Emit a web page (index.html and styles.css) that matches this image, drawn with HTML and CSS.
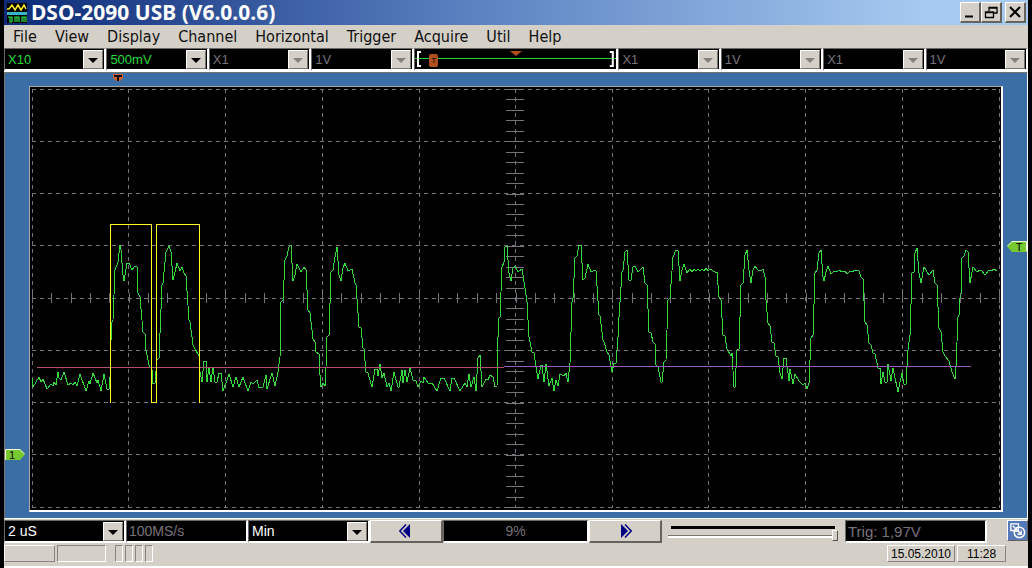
FILE: index.html
```
<!DOCTYPE html>
<html lang="en">
<head>
    <meta charset="UTF-8">
    <meta name="viewport" content="width=device-width, initial-scale=1.0">
    <title>DSO-2090 USB (V6.0.0.6)</title>
    <link rel="stylesheet" href="styles.css">
</head>
<body>

    <div class="window">
        <!-- Title bar -->
        <header class="titlebar">
            <svg class="app-icon" viewBox="0 0 20 20">
                <rect width="20" height="20" fill="#000"/>
                <rect y="9" width="20" height="3" fill="#35b6c8"/>
                <path d="M0 6H2L5 2L8 7L11 2L14 7L17 2L19 6" fill="none" stroke="#ffee22" stroke-width="1.5"/>
                <path d="M1 14H5V19M3 14V19H5M8 19V14H12V19M10 19V14M15 19V14H19V19M17 14V19" fill="none" stroke="#2fe04a" stroke-width="1.2"/>
            </svg>
            <h1>DSO-2090 USB (V6.0.0.6)</h1>
            <div class="window-buttons">
                <button type="button" aria-label="Minimize"><svg viewBox="0 0 14 14"><path d="M2 11.5H10" stroke="#000" stroke-width="2"/></svg></button>
                <button type="button" aria-label="Restore"><svg viewBox="0 0 14 14"><path d="M5 6V2.5H13V8H10M5 2.5H13M1.5 7H9.5V12.5H1.5ZM1.5 7.5H9.5M5 3H13" fill="none" stroke="#000" stroke-width="1.3"/></svg></button>
                <button type="button" class="close" aria-label="Close"><svg viewBox="0 0 14 14"><path d="M2 2L12 12M12 2L2 12" stroke="#000" stroke-width="2"/></svg></button>
            </div>
        </header>

        <!-- Menu -->
        <nav class="menu">
            <a href="#">File</a>
            <a href="#">View</a>
            <a href="#">Display</a>
            <a href="#">Channel</a>
            <a href="#">Horizontal</a>
            <a href="#">Trigger</a>
            <a href="#">Acquire</a>
            <a href="#">Util</a>
            <a href="#">Help</a>
        </nav>

        <!-- Channel settings -->
        <div class="channels">
            <div class="combo green"><select aria-label="CH1 probe"><option>X10</option></select><span class="arrow"></span></div>
            <div class="combo green"><select aria-label="CH1 voltage"><option>500mV</option></select><span class="arrow"></span></div>
            <div class="combo"><select aria-label="CH2 probe" disabled><option>X1</option></select><span class="arrow"></span></div>
            <div class="combo"><select aria-label="CH2 voltage" disabled><option>1V</option></select><span class="arrow"></span></div>
            <div class="position">
                <svg viewBox="0 0 202 20" preserveAspectRatio="none">
                    <path d="M0 9.5H202" stroke="#22d83a"/>
                    <path d="M6 3H3V17H6M195 3H198V17H195" fill="none" stroke="#fff" stroke-width="2"/>
                    <path d="M95 2H107L101 7Z" fill="#b0501e"/>
                    <rect x="14" y="5" width="9" height="13" rx="2" fill="#b0501e"/>
                    <path d="M17 9.5H21M19 9V14" stroke="#3c1a08"/>
                </svg>
            </div>
            <div class="combo"><select aria-label="CH3 probe" disabled><option>X1</option></select><span class="arrow"></span></div>
            <div class="combo"><select aria-label="CH3 voltage" disabled><option>1V</option></select><span class="arrow"></span></div>
            <div class="combo"><select aria-label="CH4 probe" disabled><option>X1</option></select><span class="arrow"></span></div>
            <div class="combo"><select aria-label="CH4 voltage" disabled><option>1V</option></select><span class="arrow"></span></div>
        </div>

        <!-- Scope screen -->
        <main class="scope">
            <svg class="screen" viewBox="30 87 971 423" preserveAspectRatio="none">
                <!-- grid -->
                <g class="grid">
                    <path d="M32 89.5H999M32 141.5H999M32 193.5H999M32 245.5H999M32 298.5H999M32 350.5H999M32 402.5H999M32 454.5H999M32 507.5H999"/>
                    <path d="M32.5 89V508M128.5 89V508M225.5 89V508M322.5 89V508M419.5 89V508M515.5 89V508M612.5 89V508M708.5 89V508M805.5 89V508M902.5 89V508M999.5 89V508"/>
                </g>
                <path class="ticks-x" d="M32 298H1000"/>
                <path class="ticks-y" d="M515 89V508"/>
                <!-- signal -->
                <polyline class="signal" points="32,378 33,387 39,377 41,382 43,379 47,389 51,384 53,386 54,382 56,385 58,372 59,378 61,380 64,372 68,385 71,383 73,385 75,382 77,386 80,374 86,391 89,381 90,384 93,373 97,383 98,380 101,391 104,374 107,389 109,389 110,377
                    111,340 112,322 113,320 115,270 118,262 120,245 121,250 123,275 124,281 127,263 129,263 132,270 135,266 137,267 138,293 140,297 143,332 145,334 146,350 149,365 152,370 153,384 155,383 157,360 159,358
                    162,285 163,283 166,252 169,246 171,252 173,280 175,272 177,263 180,271 182,267 184,273 186,276 189,320 190,322 193,345 199,356 200,372 202,382 204,361 206,361 207,382 209,367 211,382 213,367 215,382 217,382 219,373 221,373 223,391 227,380 229,374 233,387 236,377 239,387 243,377 248,391 251,382 253,384 257,380
                    259,388 263,387 266,375 267,389 272,373 275,386 278,372 280,357 281,302 283,300 285,260 287,256 289,247 291,245 293,281 295,275 297,264 301,272 304,267 306,270 308,310 310,313 313,339 315,342 316,352 319,354 320,375 321,387 323,383 325,386 326,367
                    327,337 329,335 331,272 333,270 335,257 337,247 339,275 341,281 343,268 345,263 348,271 352,269 355,283 356,285 359,327 361,328 363,348 364,349 366,372 368,373 372,387 375,369 377,369 378,376 380,364 382,378 384,373 387,387 389,383 391,391 394,372 398,387 399,387 402,370 403,383 405,370 407,382 410,368 413,380 416,381 418,387 421,381 423,383 424,377 428,383 432,383 437,391 441,378 444,378 450,391 452,378 454,378 460,391 465,383 467,387 469,374 471,387 474,377 476,391 478,358 480,355 482,387 486,379 488,380 490,375 493,377 495,387 497,386
                    498,337 499,318 500,317 502,267 504,262 505,247 507,246 509,273 511,281 513,268 515,266 518,272 522,269 525,288 527,302 529,337 532,352 534,353 536,367 538,379 541,365 542,365 544,382 546,364 549,386 552,378 554,391 556,380 558,386 560,374 564,376 566,373 568,382 570,363
                    572,302 573,298 575,258 577,256 579,245 581,245 583,280 585,278 588,264 591,272 595,270 596,271 599,315 600,316 603,340 604,342 607,352 609,355 612,372 614,363 616,363 618,337 619,317 622,272 623,270 625,252 627,250 629,280 631,280 633,267 635,266 638,272 643,267 645,283 647,285 649,332 651,333 653,342 655,344 656,365 658,367 661,382 662,382 664,362 666,360
                    668,300 670,298 673,257 676,250 678,251 680,281 682,270 684,264 687,273 690,269 692,272 694,269 696,271 698,269 700,271 702,269 704,271 706,268 708,271 710,269 715,272 717,272 719,297 721,300 723,335 725,336 727,349 731,356 732,353 734,387 735,387 737,350 739,349 741,285 743,283 745,255 747,250 749,270 751,283 753,270 755,266 758,270 762,270 763,269 765,277 766,300
                    768,323 770,326 772,342 774,343 776,356 778,357 780,373 782,379 784,358 786,358 789,381 790,369 793,384 795,374 799,381 803,385 805,383 807,389 809,383 811,338 813,335 815,273 817,270 819,253 821,250 823,277 824,281 826,272 828,266 831,274 834,271 837,272 839,270 842,272 845,271 847,274 850,271 852,272 855,270 859,271 861,277 863,279 865,322 867,325 869,343 871,345 873,353 875,354 878,368 880,368 881,384 883,372 885,382 887,382 888,364 891,381 893,368 898,392 902,373 904,384 906,384
                    908,350 910,335 912,273 914,272 915,253 917,248 919,273 921,283 924,267 929,275 933,270 935,283 937,285 939,328 941,332 943,352 945,356 949,361 952,372 955,379 956,367 958,317 959,315 960,298 961,295 962,258 964,256 966,250 968,252 970,283 973,267 977,272 980,270 982,271 985,275 989,270 991,271 994,269 997,271"/>
                <path class="level-left" d="M37 367.5H504"/>
                <path class="level-right" d="M504 366.5H971"/>
                <!-- measured bits -->
                <path class="bits" d="M110.5 403V224.5H151.5V402.5H156.5V224.5H199.5V403"/>
            </svg>

            <svg class="marker marker-time" viewBox="0 0 12 9">
                <path d="M1 1H11V5L8 8H4L1 5Z" fill="#d0662c"/>
                <path d="M2 3H10M6 3V8" stroke="#120804" stroke-width="2"/>
            </svg>
            <div class="marker marker-ch1">
                <svg viewBox="0 0 20 11"><path d="M0 0H15L20 5.5L15 11H0Z" fill="#78c832"/><path d="M0.5 11V0.5H15L19.5 5" fill="none" stroke="#f4f8d8"/></svg>
                <span>1</span>
            </div>
            <div class="marker marker-trigger">
                <svg viewBox="0 0 20 11"><path d="M20 0H5L0 5.5L5 11H20Z" fill="#78c832"/><path d="M0.5 5L5 0.5H19.5V10" fill="none" stroke="#f4f8d8"/></svg>
                <span>T</span>
            </div>
        </main>

        <!-- Time base controls -->
        <div class="controls">
            <div class="combo white"><select aria-label="Time base"><option>2 uS</option></select><span class="arrow"></span></div>
            <output class="field">100MS/s</output>
            <div class="combo white"><select aria-label="Measurement"><option>Min</option></select><span class="arrow"></span></div>
            <button type="button" class="step" aria-label="Back"><svg viewBox="0 0 14 14"><path d="M7 0.5L0.8 7L7 13.5" fill="none" stroke="#000080" stroke-width="1.5"/><path d="M11 0V14L4 7Z" fill="#000080"/></svg></button>
            <output class="field center">9%</output>
            <button type="button" class="step" aria-label="Forward"><svg viewBox="0 0 14 14"><path d="M7 0.5L13.2 7L7 13.5" fill="none" stroke="#000080" stroke-width="1.5"/><path d="M3 0V14L10 7Z" fill="#000080"/></svg></button>
            <input type="range" class="slider" aria-label="Position" min="0" max="100" value="100">
            <output class="field trig">Trig: 1,97V</output>
            <button type="button" class="link-button" aria-label="Connection">
                <svg viewBox="0 0 20 20"><path d="M8 10H3V3H11V6M5 5L11 11M11 7V11H7" fill="none" stroke="#fff" stroke-width="1.4"/><circle cx="12" cy="12" r="5.5" fill="none" stroke="#fff" stroke-width="1.6"/><path d="M10 10L14 14M14 10V14H10" fill="none" stroke="#fff" stroke-width="1.5"/></svg>
            </button>
        </div>

        <!-- Status bar -->
        <footer class="status">
            <div class="panel first"></div>
            <div class="panel second"></div>
            <div class="panel small"></div>
            <div class="panel small"></div>
            <div class="panel small"></div>
            <div class="panel small"></div>
            <div class="panel date">15.05.2010</div>
            <div class="panel time">11:28</div>
        </footer>
    </div>

</body>
</html>
```
FILE: styles.css
```
* {
    box-sizing: border-box;
}

/* Black edge around the window */
body {
    margin: 0;
    padding: 0 4px;
    min-height: 100vh;
    display: flex;
    background-color: #000;
    font-family: "Liberation Sans", Arial, sans-serif;
}

.window {
    flex: 1;
    min-width: 0;
    display: flex;
    flex-direction: column;
    background-color: #d4d0c8;
}

svg {
    display: block;
}

button {
    display: flex;
    align-items: center;
    justify-content: center;
    margin: 0;
    padding: 0;
    background-color: #d4d0c8;
    border: 1px solid;
    border-width: 1px 2px 2px 1px;
    border-color: #fff #66635e #66635e #fff;
}

/* Title bar */
.titlebar {
    display: flex;
    align-items: center;
    height: 25px;
    padding: 0 2px 0 3px;
    background: linear-gradient(to right, #0c2a76, #5a80c0 45%, #a6caf0 90%);
}

.app-icon {
    width: 20px;
    height: 20px;
}

.titlebar h1 {
    flex: 1;
    margin: 0 0 0 4px;
    font: bold 21px/25px "Noto Sans", sans-serif;
    color: #fff;
}

.window-buttons {
    display: flex;
}

.window-buttons button {
    width: 21px;
    height: 21px;
}

.window-buttons .close {
    margin-left: 3px;
}

.window-buttons svg {
    width: 14px;
    height: 14px;
}

/* Menu */
.menu {
    display: flex;
    gap: 18px;
    height: 23px;
    padding-left: 9px;
}

.menu a {
    font: 16px/23px "DejaVu Sans Condensed", "Noto Sans", sans-serif;
    color: #111;
    text-decoration: none;
}

/* Channel settings */
.channels {
    display: grid;
    grid-template-columns: repeat(10, 1fr);
    height: 24px;
    border-bottom: 1px solid #fff;
}

.combo, .field, .position {
    min-width: 0;
    overflow: hidden;
    background-color: #000;
    border: 1px solid;
    border-width: 1px 2px 2px 1px;
    border-color: #6c6a66 #fff #fff #6c6a66;
}

.combo {
    display: flex;
    position: relative;
}

.combo select {
    flex: 1;
    min-width: 0;
    padding: 0 24px 0 3px;
    border: 0;
    appearance: none;
    background-color: #000;
    color: #77737a;
    font: 13px "Liberation Sans", Arial, sans-serif;
    opacity: 1;
}

.combo.green select {
    color: #22dd3c;
}

/* Drop-down button over the select */
.arrow {
    position: absolute;
    top: 1px;
    right: 1px;
    bottom: 0;
    width: 20px;
    background-color: #d4d0c8;
    border: 1px solid;
    border-color: #fff #77746e #77746e #fff;
    pointer-events: none;
}

.arrow::after {
    content: "";
    position: absolute;
    top: 7px;
    left: 4px;
    border: 5px solid transparent;
    border-top-color: #000;
    border-bottom: 0;
}

select:disabled + .arrow::after {
    border-top-color: #85817c;
}

.position {
    grid-column: span 2;
}

.position svg {
    width: 100%;
    height: 20px;
}

/* Scope screen */
.scope {
    flex: 1;
    display: flex;
    position: relative;
    min-height: 300px;
    padding: 13px 24px 6px;
    background-color: #3a6ea5;
    border: 1px solid;
    border-color: #77746e #fff #fff #77746e;
}

.screen {
    flex: 1;
    min-width: 0;
    width: 100%;
    height: 100%;
    background-color: #000;
    border: 1px solid;
    border-width: 1px 2px 2px 1px;
    border-color: #aaa69e #fff #fff #aaa69e;
    shape-rendering: crispEdges;
}

.screen path, .screen polyline {
    fill: none;
}

.grid {
    stroke: #77737a;
    stroke-dasharray: 4 4;
}

.ticks-x {
    stroke: #77737a;
    stroke-width: 10px;
    stroke-dasharray: 1 18.34;
}

.ticks-y {
    stroke: #77737a;
    stroke-width: 18px;
    stroke-dasharray: 1 9.45;
}

.signal {
    stroke: #35d83d;
}

.level-left {
    stroke: #b3506f;
}

.level-right {
    stroke: #9a58b8;
}

.bits {
    stroke: #ffff20;
}

/* Markers on the edge of the screen */
.marker {
    position: absolute;
    width: 20px;
    height: 11px;
    font-size: 11px;
    line-height: 12px;
    text-align: center;
}

.marker span {
    position: absolute;
    inset: 0;
}

.marker-time {
    top: 0;
    left: 10.5%;
    width: 12px;
    height: 9px;
}

.marker-ch1 {
    top: 84.5%;
    left: 0;
}

.marker-ch1 span {
    right: 6px;
}

.marker-trigger {
    top: 37.7%;
    right: 0;
}

.marker-trigger span {
    left: 4px;
}

/* Time base controls */
.controls {
    display: grid;
    grid-template-columns: 122fr 122fr 122fr 73fr 146fr 73fr 183fr 142fr 41fr;
    height: 24px;
    padding-top: 1px;
}

.controls .combo select {
    font-size: 14px;
    color: #fff;
}

.field {
    padding-left: 2px;
    font-size: 14px;
    line-height: 21px;
    color: #77737a;
}

.field.center {
    padding: 0;
    text-align: center;
}

.field.trig {
    font-size: 15px;
}

.step svg {
    width: 14px;
    height: 14px;
}

.slider {
    appearance: none;
    width: auto;
    min-width: 0;
    height: 20px;
    margin: 0 7px 0 6px;
    background: linear-gradient(#000, #000) 3px 6px / calc(100% - 6px) 3px no-repeat,
        linear-gradient(#77746e, #77746e) 0 15px / 100% 1px no-repeat,
        linear-gradient(#fff, #fff) 0 16px / 100% 2px no-repeat;
}

.slider::-webkit-slider-thumb {
    appearance: none;
    width: 6px;
    height: 11px;
    margin-top: 10px;
    background-color: #d4d0c8;
    border: 1px solid;
    border-color: #fff #55534e #55534e #fff;
}

.link-button {
    justify-self: end;
    width: 21px;
    height: 21px;
    background-color: #5478b8;
    border-width: 1px;
}

.link-button svg {
    width: 19px;
    height: 19px;
}

/* Status bar */
.status {
    display: flex;
    height: 25px;
    padding: 2px 22px 4px 0;
    border-bottom: 2px solid #fff;
}

.panel {
    border: 1px solid;
    border-color: #8a867f #fff #fff #8a867f;
    font-size: 12px;
    line-height: 17px;
    text-align: center;
}

.panel.first {
    width: 51px;
    margin-right: 2px;
    border-color: #fff #8a867f #8a867f #fff;
}

.panel.second {
    width: 49px;
    margin-right: 9px;
}

.panel.small {
    width: 8px;
    margin-right: 2px;
}

.panel.date, .panel.time {
    border-color: #fff #8a867f #8a867f #fff;
}

.panel.date {
    width: 68px;
    margin: 0 2px 0 auto;
}

.panel.time {
    width: 49px;
}
```
